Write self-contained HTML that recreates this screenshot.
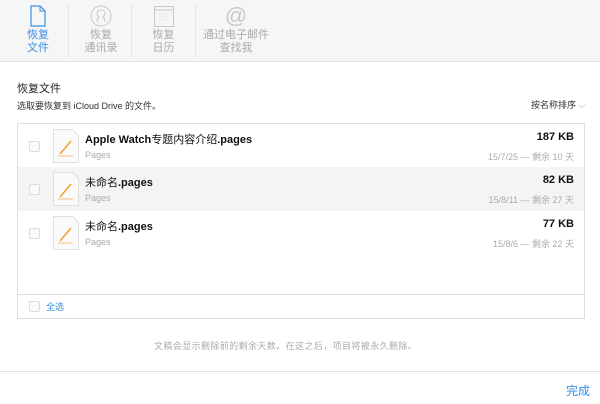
<!DOCTYPE html><html><head><meta charset="utf-8"><style>
*{margin:0;padding:0;box-sizing:border-box}
body{width:600px;height:404px;background:#fff;font-family:"Liberation Sans","Noto Sans CJK SC",sans-serif;position:relative;overflow:hidden;color:#333}
.hdr{position:absolute;left:0;top:0;width:600px;height:62px;background:#f6f6f6;border-bottom:1px solid #e2e2e2}
.tab{position:absolute;top:0;height:61px;text-align:center;font-size:11px;line-height:13px;color:#aaa}
.tab svg{display:block;margin:5px auto 2px}
.sep{position:absolute;top:4px;width:1px;height:54px;background:#e6e6e6}
.abs{position:absolute;white-space:nowrap}
.box{position:absolute;left:17px;top:123px;width:568px;height:196px;border:1px solid #ddd}
.row{position:absolute;left:0;width:566px;height:44px}
.cb{position:absolute;left:11px;width:11px;height:11px;border:1px solid #ddd;border-radius:2px;background:#fafafa}
.name{position:absolute;left:67px;font-size:11px;color:#111}
.name b{font-weight:bold}
.sub{position:absolute;left:67px;font-size:9px;color:#aaa}
.sz{position:absolute;right:10px;font-size:11px;font-weight:bold;color:#111}
.dt{position:absolute;right:10px;font-size:9px;color:#aaa}
.ic{position:absolute;left:35px}
</style></head><body>
<div class="hdr">
<div class="tab" style="left:8px;width:60px;color:#3b8ee0"><svg width="16" height="22" viewBox="0 0 16 22"><path d="M1 1h9l5 5v15H1z" fill="none" stroke="#3b8ee0" stroke-width="1.2"/><path d="M10 1v5h5" fill="none" stroke="#3b8ee0" stroke-width="1"/></svg>恢复<br>文件</div>
<div class="sep" style="left:68px"></div>
<div class="tab" style="left:70px;width:62px"><svg width="22" height="22" viewBox="0 0 22 22"><circle cx="11" cy="11" r="10" fill="none" stroke="#c8c8c8"/><path d="M7 17c0-3 1-4 2-5-1-1-2-2-2-4 0-2 2-3 4-3s4 1 4 3c0 2-1 3-2 4 1 1 2 2 2 5" fill="none" stroke="#c8c8c8"/></svg>恢复<br>通讯录</div>
<div class="sep" style="left:131px"></div>
<div class="tab" style="left:132px;width:63px"><svg width="20" height="22" viewBox="0 0 20 22"><rect x=".5" y="1.5" width="19" height="20" fill="none" stroke="#c8c8c8"/><path d="M1 5h18" stroke="#c8c8c8"/><path d="M5 9h10M5 12h10M5 15h10" stroke="#ddd" stroke-dasharray="1 1"/></svg>恢复<br>日历</div>
<div class="sep" style="left:195px"></div>
<div class="tab" style="left:196px;width:80px"><svg width="22" height="22" viewBox="0 0 22 22"><text x="11" y="18" text-anchor="middle" font-size="22" fill="#c8c8c8" font-family="Liberation Sans">@</text></svg>通过电子邮件<br>查找我</div>
</div>
<div class="abs" style="left:17px;top:80px;font-size:11px;color:#222">恢复文件</div>
<div class="abs" style="left:17px;top:99px;font-size:9px;color:#333">选取要恢复到 iCloud Drive 的文件。</div>
<div class="abs" style="left:531px;top:98px;font-size:9px;color:#333">按名称排序 <span style="color:#999">⌵</span></div>
<div class="box">
<div class="row" style="top:0"><div class="cb" style="top:17px"></div><svg class="ic" style="top:5px" width="26" height="34" viewBox="0 0 26 34"><path d="M.5.5h19l6 6v27H.5z" fill="#fafafa" stroke="#e0e0e0"/><path d="M7 25L18 12" stroke="#f3a02f" stroke-width="1.5"/><path d="M5 27h15" stroke="#f5c07a"/></svg><div class="name" style="top:7px"><b>Apple Watch</b>专题内容介绍<b>.pages</b></div><div class="sub" style="top:26px">Pages</div><div class="sz" style="top:7px">187 KB</div><div class="dt" style="top:26px">15/7/25 — 剩余 10 天</div></div>
<div class="row" style="top:43px;background:#f4f4f4"><div class="cb" style="top:17px"></div><svg class="ic" style="top:5px" width="26" height="34" viewBox="0 0 26 34"><path d="M.5.5h19l6 6v27H.5z" fill="#fafafa" stroke="#e0e0e0"/><path d="M7 25L18 12" stroke="#f3a02f" stroke-width="1.5"/><path d="M5 27h15" stroke="#f5c07a"/></svg><div class="name" style="top:7px">未命名<b>.pages</b></div><div class="sub" style="top:26px">Pages</div><div class="sz" style="top:7px">82 KB</div><div class="dt" style="top:26px">15/8/11 — 剩余 27 天</div></div>
<div class="row" style="top:87px"><div class="cb" style="top:17px"></div><svg class="ic" style="top:5px" width="26" height="34" viewBox="0 0 26 34"><path d="M.5.5h19l6 6v27H.5z" fill="#fafafa" stroke="#e0e0e0"/><path d="M7 25L18 12" stroke="#f3a02f" stroke-width="1.5"/><path d="M5 27h15" stroke="#f5c07a"/></svg><div class="name" style="top:7px">未命名<b>.pages</b></div><div class="sub" style="top:26px">Pages</div><div class="sz" style="top:7px">77 KB</div><div class="dt" style="top:26px">15/8/6 — 剩余 22 天</div></div>
<div style="position:absolute;left:0;top:170px;width:566px;height:1px;background:#ddd"></div>
<div class="cb" style="top:177px"></div><div class="abs" style="left:28px;top:176px;font-size:9px;color:#3b8ee0">全选</div>
</div>
<div class="abs" style="left:154px;top:339px;font-size:9px;color:#aaa;letter-spacing:0.4px">文稿会显示删除前的剩余天数。在这之后，项目将被永久删除。</div>
<div style="position:absolute;left:0;top:371px;width:600px;height:1px;background:#e2e2e2"></div>
<div class="abs" style="left:566px;top:382px;font-size:12px;color:#3b8ee0">完成</div>
</body></html>
